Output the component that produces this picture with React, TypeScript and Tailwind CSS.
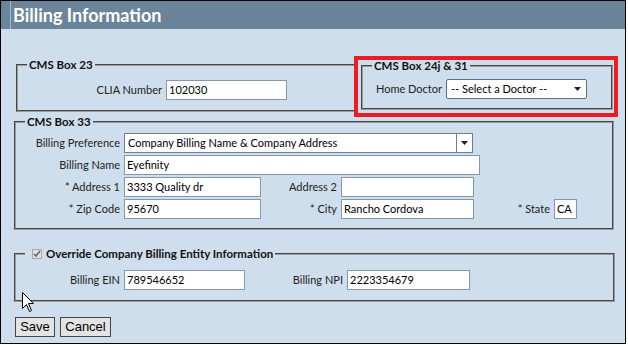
import React from "react";

const font = "font-['Lato','Noto_Sans',sans-serif]";

function Arrow() {
  return (
    <svg width="7" height="4" viewBox="0 0 7 4">
      <polygon points="0,0 7,0 3.5,4" fill="#222" />
    </svg>
  );
}

function TextBox({ value, w }: { value?: string; w: string }) {
  return (
    <div
      className={`${w} h-[20px] shrink-0 overflow-hidden whitespace-nowrap border border-[#8497ad] bg-white pl-[2px] text-[11px] leading-[18px] text-black`}
    >
      {value}
    </div>
  );
}

function Label({ text, w }: { text: string; w: string }) {
  return (
    <div
      className={`${w} shrink-0 whitespace-nowrap pr-[4px] text-right text-[11px] leading-[16px] text-[#222]`}
    >
      {text}
    </div>
  );
}

function Legend({ children }: { children: React.ReactNode }) {
  return (
    <legend className="px-[2px] text-[11.5px] font-bold leading-[16px] text-[#111]">
      {children}
    </legend>
  );
}

const fs = "border-2 [border-style:groove] border-[#9a9a9a] px-[9px]";

export default function App() {
  return (
    <div
      className={`relative h-[344px] w-[626px] overflow-hidden border border-black bg-[#cfdeec] ${font}`}
    >
      {/* header */}
      <div className="flex h-[28px] items-stretch bg-[#6a8599]">
        <div className="w-[9px]" />
        <div className="w-[1px] bg-[#a9b8c6]" />
        <div className="flex items-center pl-[2px] text-[18px] font-bold leading-[24px] text-white">
          Billing Information
        </div>
      </div>

      {/* top row */}
      <div className="mt-[28px] flex items-start">
        <fieldset className={`${fs} ml-[15px] w-[342px] pb-[10px]`}>
          <Legend>CMS Box 23</Legend>
          <div className="mt-[7px] flex items-center">
            <Label text="CLIA Number" w="w-[139px]" />
            <TextBox value="102030" w="w-[121px]" />
          </div>
        </fieldset>

        <fieldset className={`${fs} ml-[3px] mt-[1px] w-[252px] pb-[9px]`}>
          <Legend>CMS Box 24j &amp; 31</Legend>
          <div className="mt-[5px] flex items-center">
            <Label text="Home Doctor" w="w-[74px]" />
            <div className="flex h-[20px] w-[141px] shrink-0 items-center justify-between whitespace-nowrap rounded-[2px] border border-[#5f7083] bg-white pl-[4px] pr-[5px] text-[11px] text-black">
              <span>-- Select a Doctor --</span>
              <Arrow />
            </div>
          </div>
        </fieldset>
      </div>

      {/* CMS Box 33 */}
      <fieldset className={`${fs} ml-[13px] mt-[2px] w-[600px] pb-[9px]`}>
        <Legend>CMS Box 33</Legend>
        <div className="mt-[3px] flex flex-col gap-[2px]">
          <div className="flex items-center">
            <Label text="Billing Preference" w="w-[99px]" />
            <div className="flex h-[20px] w-[349px] shrink-0 border border-[#6f8093] bg-white text-[11px] text-black">
              <div className="flex-1 whitespace-nowrap pl-[3px] leading-[18px]">
                Company Billing Name &amp; Company Address
              </div>
              <div className="flex w-[16px] items-center justify-center border-l border-[#6f8093]">
                <Arrow />
              </div>
            </div>
          </div>
          <div className="flex items-center">
            <Label text="Billing Name" w="w-[99px]" />
            <TextBox value="Eyefinity" w="w-[356px]" />
          </div>
          <div className="flex items-center">
            <Label text="* Address 1" w="w-[99px]" />
            <TextBox value="3333 Quality dr" w="w-[137px]" />
            <Label text="Address 2" w="w-[80px]" />
            <TextBox w="w-[133px]" />
          </div>
          <div className="flex items-center">
            <Label text="* Zip Code" w="w-[99px]" />
            <TextBox value="95670" w="w-[137px]" />
            <Label text="* City" w="w-[80px]" />
            <TextBox value="Rancho Cordova" w="w-[133px]" />
            <Label text="* State" w="w-[80px]" />
            <TextBox value="CA" w="w-[23px]" />
          </div>
        </div>
      </fieldset>

      {/* Override */}
      <fieldset className={`${fs} ml-[13px] mt-[16px] w-[601px] pb-[10px]`}>
        <legend className="flex items-center px-[2px] text-[11.5px] font-bold leading-[16px] text-[#111]">
          <span className="ml-[5px] mr-[4px] flex h-[10px] w-[10px] items-center justify-center border border-[#a8a8a8] bg-[#e0e0e0]">
            <svg width="8" height="8" viewBox="0 0 8 8">
              <path d="M1 4 L3 6 L7 1" fill="none" stroke="#666" strokeWidth="1.6" />
            </svg>
          </span>
          Override Company Billing Entity Information
        </legend>
        <div className="mt-[8px] flex items-center">
          <Label text="Billing EIN" w="w-[99px]" />
          <TextBox value="789546652" w="w-[121px]" />
          <Label text="Billing NPI" w="w-[102px]" />
          <TextBox value="2223354679" w="w-[123px]" />
        </div>
      </fieldset>

      {/* buttons */}
      <div className="ml-[14px] mt-[15px] flex gap-[5px] font-['Liberation_Sans',Arial,sans-serif] text-[13px] text-black">
        <button className="h-[20px] w-[40px] border border-[#444] bg-[#e3e3e3] leading-[18px]">
          Save
        </button>
        <button className="h-[20px] w-[51px] border border-[#444] bg-[#e3e3e3] leading-[18px]">
          Cancel
        </button>
      </div>

      {/* highlight annotation */}
      <div className="pointer-events-none absolute left-[353px] top-[55px] h-[61px] w-[264px] border-4 border-[#ed1c24]" />

      {/* mouse cursor */}
      <svg
        className="pointer-events-none absolute left-[21px] top-[291px]"
        width="13"
        height="21"
        viewBox="0 0 13 21"
      >
        <path
          d="M0.5 0.5 L0.5 16.5 L4.5 12.5 L7.5 19.5 L9.5 18.5 L6.5 11.5 L11.5 11.5 Z"
          fill="white"
          stroke="black"
          strokeWidth="1"
          strokeLinejoin="round"
        />
      </svg>
    </div>
  );
}
